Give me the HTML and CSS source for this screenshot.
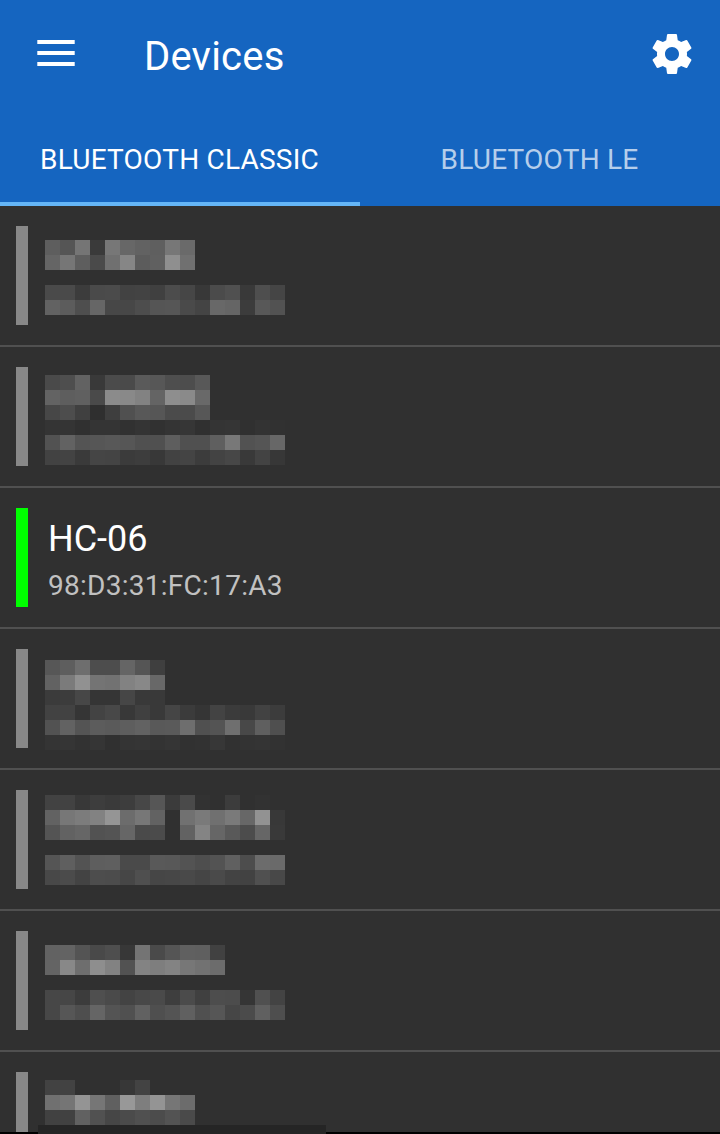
FILE: index.html
```html
<!DOCTYPE html>
<html lang="en">
<head>
<meta charset="utf-8">
<title>Devices</title>
<link rel="stylesheet" href="styles.css">
</head>
<body>
<div class="screen">
  <header class="header">
    <div class="toolbar">
      <svg class="menu-icon" width="38" height="26" viewBox="0 0 38 26" fill="#fff"><path d="M.3 0h37.4v4H.3zM.3 11h37.4v4H.3zM.3 22h37.4v4H.3z"/></svg>
      <h1 class="title">Devices</h1>
      <svg class="settings-icon" width="48" height="48" viewBox="0 0 24 24" fill="#fff"><path d="M19.43 12.98c.04-.32.07-.64.07-.98s-.03-.66-.07-.98l2.11-1.65c.19-.15.24-.42.12-.64l-2-3.46c-.12-.22-.39-.3-.61-.22l-2.49 1c-.52-.4-1.08-.73-1.69-.98l-.38-2.65C14.46 2.18 14.25 2 14 2h-4c-.25 0-.46.18-.49.42l-.38 2.65c-.61.25-1.17.59-1.69.98l-2.49-1c-.23-.09-.49 0-.61.22l-2 3.46c-.13.22-.07.49.12.64l2.11 1.65c-.04.32-.07.65-.07.98s.03.66.07.98l-2.11 1.65c-.19.15-.24.42-.12.64l2 3.46c.12.22.39.3.61.22l2.49-1c.52.4 1.08.73 1.69.98l.38 2.65c.03.24.24.42.49.42h4c.25 0 .46-.18.49-.42l.38-2.65c.61-.25 1.17-.59 1.69-.98l2.49 1c.23.09.49 0 .61-.22l2-3.46c.12-.22.07-.49-.12-.64l-2.11-1.65zM12 15.5c-1.93 0-3.5-1.57-3.5-3.5s1.57-3.5 3.5-3.5 3.5 1.57 3.5 3.5-1.57 3.5-3.5 3.5z"/></svg>
    </div>
    <nav class="tabs">
      <div class="tab tab-active">BLUETOOTH CLASSIC</div>
      <div class="tab">BLUETOOTH LE</div>
    </nav>
  </header>
  <main class="list">
    <div class="device"><div class="bar"></div><div class="mosaic start-34" data-mosaic="0"></div></div>
    <div class="device"><div class="bar"></div><div class="mosaic start-28" data-mosaic="1"></div></div>
    <div class="device">
      <div class="bar bar-on"></div>
      <div class="info"><div class="name">HC-06</div><div class="address">98:D3:31:FC:17:A3</div></div>
    </div>
    <div class="device"><div class="bar"></div><div class="mosaic start-31" data-mosaic="2"></div></div>
    <div class="device"><div class="bar"></div><div class="mosaic start-25" data-mosaic="3"></div></div>
    <div class="device"><div class="bar"></div><div class="mosaic start-34" data-mosaic="4"></div></div>
    <div class="device"><div class="bar"></div><div class="mosaic start-28" data-mosaic="5"></div></div>
  </main>
  <div class="bottom-edge"></div>
  <div class="toast-edge"></div>
</div>
<script src="mosaic.js"></script>
</body>
</html>
```
FILE: styles.css
```css
* { box-sizing: border-box; }

body {
  margin: 0;
  background: #303030;
  font-family: Roboto, "Liberation Sans", sans-serif;
}

.screen {
  position: relative;
  display: flex;
  flex-direction: column;
  width: 720px;
  height: 1134px;
  overflow: hidden;
}

.header {
  flex: none;
  height: 206px;
  background: #1565c0;
  color: #fff;
}

.toolbar {
  display: flex;
  align-items: center;
  height: 110px;
  padding: 0 24px 4px 37px;
}

.menu-icon { display: block; }

.title {
  flex: 1;
  margin: 8px 0 0 69px;
  font-size: 40px;
  font-weight: 400;
  letter-spacing: 0.2px;
  line-height: 48px;
}

.settings-icon { display: block; margin-top: 2px; }

.tabs {
  display: grid;
  grid-template-columns: 1fr 1fr;
  height: 96px;
}

.tab {
  height: 96px;
  padding: 33px 1px 0 0;
  border-bottom: 4px solid transparent;
  color: rgba(255, 255, 255, 0.7);
  font-size: 28px;
  letter-spacing: 0.22px;
  line-height: 34px;
  text-align: center;
}

.tab-active {
  border-bottom-color: #64b5f6;
  color: #fff;
}

.list {
  flex: 1;
  min-height: 0;
  overflow: hidden;
}

.device {
  display: flex;
  height: 141px;
  padding-left: 16px;
  border-bottom: 2px solid #505050;
}

.bar {
  width: 12px;
  height: 99px;
  margin-top: 20px;
  background: #888;
}

.bar-on { background: #0f0; }

.info { padding: 29px 0 0 20px; }

.name {
  color: #fff;
  font-size: 36px;
  line-height: 44px;
}

.address {
  margin-top: 8px;
  color: #c1c1c1;
  font-size: 28px;
  letter-spacing: 0.27px;
  line-height: 34px;
}

.mosaic {
  display: grid;
  grid-template-columns: repeat(16, 15px);
  grid-auto-rows: 15px;
  align-content: start;
  margin-left: 17px;
}

.start-25 { padding-top: 25px; }
.start-28 { padding-top: 28px; }
.start-31 { padding-top: 31px; }
.start-34 { padding-top: 34px; }

.bottom-edge {
  flex: none;
  height: 2px;
  background: #000;
}

.toast-edge {
  position: absolute;
  left: 38px;
  bottom: 0;
  width: 288px;
  height: 9px;
  background: #252525;
}
```
FILE: mosaic.js
```js
// Gray levels of the pixelated device names and addresses, one string per row.
const mosaics = [
  [
    "5e 55 75 3a 77 67 62 5f 77 6a",
    "65 76 5e 4a 70 86 5c 60 8f 70",
    "",
    "4a 4a 3c 4a 4b 42 43 40 4c 46 38 4b 50 39 4e 45",
    "62 5c 4e 66 47 47 4d 55 56 4a 44 68 65 3c 58 52"
  ],
  [
    "4a 4e 62 39 4b 4a 5a 57 4e 4d 58",
    "63 5e 60 4a 8b 89 82 64 8e 8a 69",
    "47 4d 40 2f 3e 50 58 56 4b 4b 57",
    "34 34 30 34 34 31 34 31 34 36 30 34 35 30 33 31",
    "52 62 54 56 58 56 50 50 5e 50 50 5f 78 52 55 67",
    "42 43 3a 45 44 3b 3d 38 42 44 3c 43 47 39 43 37"
  ],
  [
    "57 5e 6e 4d 4d 65 55 3f",
    "62 7b 91 74 72 82 88 68",
    "3b 3c 47 35 35 46 39 39",
    "42 42 35 43 48 38 40 39 45 3b 35 43 3b 39 42 3c",
    "52 62 54 5c 5a 5e 62 59 5a 6e 50 54 6f 48 5f 4f",
    "34 35 32 35 30 34 35 33 35 31 32 37 31 33 34 32"
  ],
  [
    "42 42 38 3d 3a 3d 47 56 3b 4a 32 30 3c 30 32 30",
    "62 77 7c 82 95 6c 77 62 30 71 7a 70 7a 67 92 38",
    "54 62 66 52 54 66 4a 4b 30 62 84 66 59 4c 66 39",
    "",
    "55 5f 53 5e 5f 4a 4a 59 58 53 4e 53 60 4d 6c 6a",
    "48 4b 43 4d 4c 46 4f 46 47 49 45 4a 43 42 50 48"
  ],
  [
    "62 63 54 49 4e 37 74 4a 55 60 5f 41",
    "64 88 6e 8e 82 52 83 7e 83 77 72 6c",
    "",
    "47 46 3c 4f 4a 43 48 4a 3e 4b 40 4d 4c 35 50 43",
    "47 56 4e 65 54 50 61 4f 54 60 50 56 46 4b 60 4e"
  ],
  [
    "42 42 30 30 30 37 43",
    "70 75 94 76 60 98 7e 94 76 6c",
    "41 41 61 51 46 4b 50 4c 53 4a"
  ]
];

document.querySelectorAll("[data-mosaic]").forEach(function (box) {
  mosaics[Number(box.dataset.mosaic)].forEach(function (row) {
    const levels = row ? row.split(" ") : [];
    for (let i = 0; i < 16; i++) {
      const cell = document.createElement("span");
      if (levels[i]) cell.style.background = "#" + levels[i].repeat(3);
      box.appendChild(cell);
    }
  });
});
```
